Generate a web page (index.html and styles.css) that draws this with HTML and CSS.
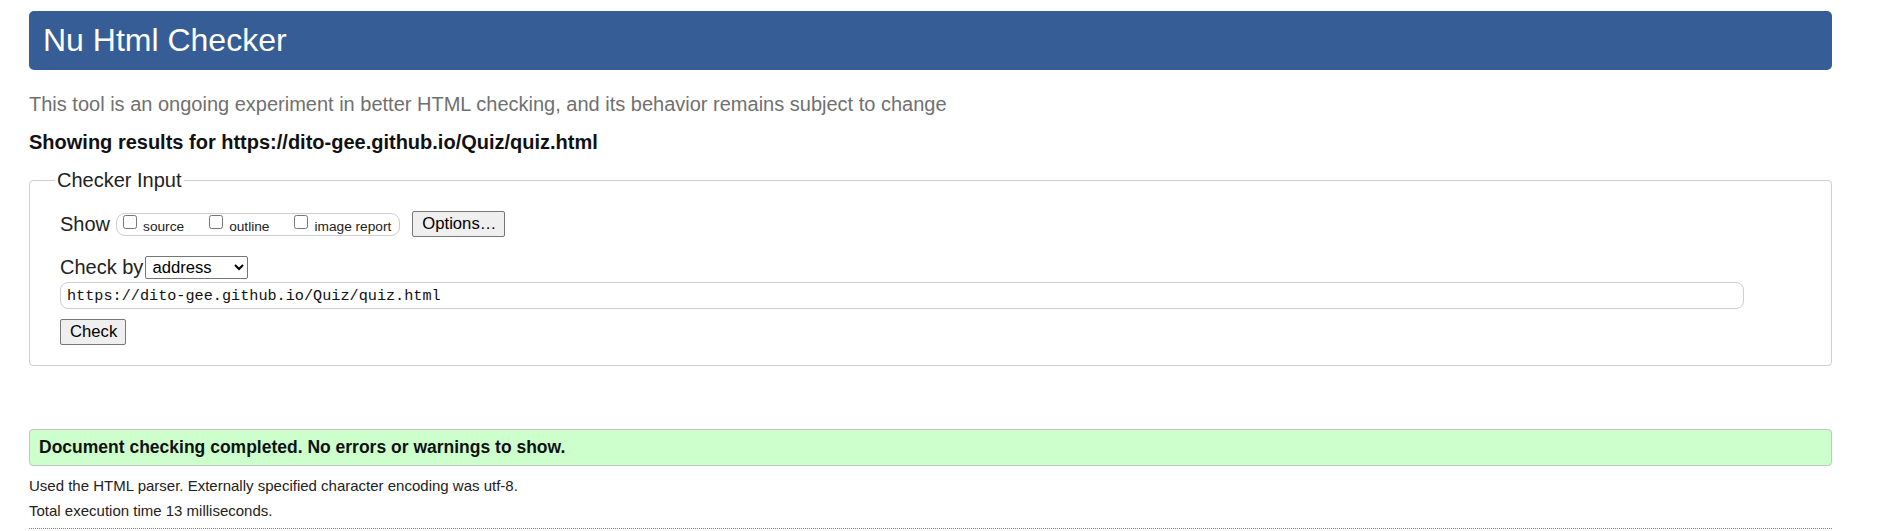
FILE: index.html
```html
<!DOCTYPE html>
<html lang="en">
<head>
<meta charset="utf-8">
<title>Showing results for https://dito-gee.github.io/Quiz/quiz.html - Nu Html Checker</title>
<link rel="stylesheet" href="styles.css">
</head>
<body>
<h1 class="title">Nu Html Checker</h1>
<p class="subtitle">This tool is an ongoing experiment in better HTML checking, and its behavior remains subject to change</p>
<p class="showing">Showing results for https://dito-gee.github.io/Quiz/quiz.html</p>
<fieldset class="checker">
  <legend class="legend">Checker Input</legend>
  <div class="row show-row">
    <span class="row-label">Show</span>
    <span class="group">
      <label class="opt"><input type="checkbox" class="cb"><span>source</span></label>
      <label class="opt"><input type="checkbox" class="cb"><span>outline</span></label>
      <label class="opt last"><input type="checkbox" class="cb"><span>image report</span></label>
    </span>
    <button class="btn options">Options…</button>
  </div>
  <div class="row by-row">
    <span class="row-label">Check by</span>
    <select class="select"><option>address</option></select>
  </div>
  <input class="url" type="text" value="https://dito-gee.github.io/Quiz/quiz.html">
  <div class="row check-row">
    <button class="btn check">Check</button>
  </div>
</fieldset>
<div class="success">Document checking completed. No errors or warnings to show.</div>
<p class="detail first">Used the HTML parser. Externally specified character encoding was utf-8.</p>
<p class="detail">Total execution time 13 milliseconds.</p>
<div class="rule"></div>
</body>
</html>
```
FILE: styles.css
```css
html, body {
  background: #fff;
}
body {
  margin: 0;
  padding: 11px 58px 0 29px;
  font-family: "Liberation Sans", Arial, sans-serif;
  color: #111;
}
.title {
  margin: 0;
  height: 59px;
  box-sizing: border-box;
  padding: 0 14px;
  display: flex;
  align-items: center;
  background: #365d95;
  color: #fff;
  font-weight: normal;
  font-size: 32px;
  border-radius: 5px;
}
.subtitle {
  margin: 22px 0 0;
  font-size: 20px;
  line-height: 24px;
  color: #707070;
}
.showing {
  margin: 14px 0 0;
  font-size: 20px;
  line-height: 24px;
  font-weight: bold;
  color: #111;
}
.checker {
  margin: 14px 0 0;
  padding: 0 0 20px 30px;
  border: 1px solid #cfcfcf;
  border-radius: 4px;
  min-width: 0;
}
.legend {
  margin-left: -5px;
  padding: 0 2px;
  font-size: 20px;
  line-height: 24px;
  color: #222;
}
.row {
  display: flex;
  align-items: center;
}
.show-row {
  margin-top: 19px;
  height: 26px;
}
.row-label {
  font-size: 20px;
  line-height: 24px;
  color: #222;
}
.group {
  margin-left: 6px;
  display: flex;
  align-items: center;
  height: 23px;
  box-sizing: border-box;
  padding: 0 8px 0 6px;
  border: 1px solid #cfcfcf;
  border-radius: 9px;
}
.opt {
  display: flex;
  align-items: center;
  gap: 6px;
  margin-right: 25px;
  font-size: 13.7px;
  color: #222;
}
.opt.last {
  margin-right: 0;
}
.opt span {
  position: relative;
  top: 2px;
}
.cb {
  margin: 0;
  width: 14px;
  height: 14px;
  position: relative;
  top: -2px;
}
.btn {
  font-family: "Liberation Sans", Arial, sans-serif;
  font-size: 16.67px;
  color: #000;
  background: #efefef;
  border: 1px solid #767676;
  border-radius: 2px;
  height: 26px;
  padding: 0 9px;
  box-sizing: border-box;
}
.options {
  margin-left: 12px;
  width: 93px;
}
.by-row {
  margin-top: 18px;
  height: 24px;
}
.select {
  margin-left: 2px;
  width: 103px;
  height: 23px;
  font-family: "Liberation Sans", Arial, sans-serif;
  font-size: 16.67px;
  color: #000;
  background: #fff;
  border: 1px solid #767676;
  border-radius: 2px;
  padding: 0 2px;
}
.url {
  display: block;
  margin-top: 3px;
  width: 1684px;
  height: 27px;
  box-sizing: border-box;
  padding: 0 6px;
  border: 1px solid #cfcfcf;
  border-radius: 8px;
  font-family: "Liberation Mono", "DejaVu Sans Mono", monospace;
  font-size: 15.2px;
  color: #111;
  outline: none;
}
.check-row {
  margin-top: 10px;
}
.check {
  width: 66px;
}
.success {
  margin-top: 63px;
  height: 37px;
  box-sizing: border-box;
  padding: 0 9px;
  display: flex;
  align-items: center;
  background: #ccffcc;
  border: 1px solid #c4c4c4;
  border-radius: 4px;
  font-size: 17.5px;
  font-weight: bold;
  color: #111;
}
.detail {
  margin: 0;
  font-size: 15px;
  line-height: 18px;
  color: #222;
}
.detail.first {
  margin-top: 11px;
}
.detail + .detail {
  margin-top: 7px;
}
.rule {
  margin-top: 8px;
  border-top: 1px dotted #888;
}
```
